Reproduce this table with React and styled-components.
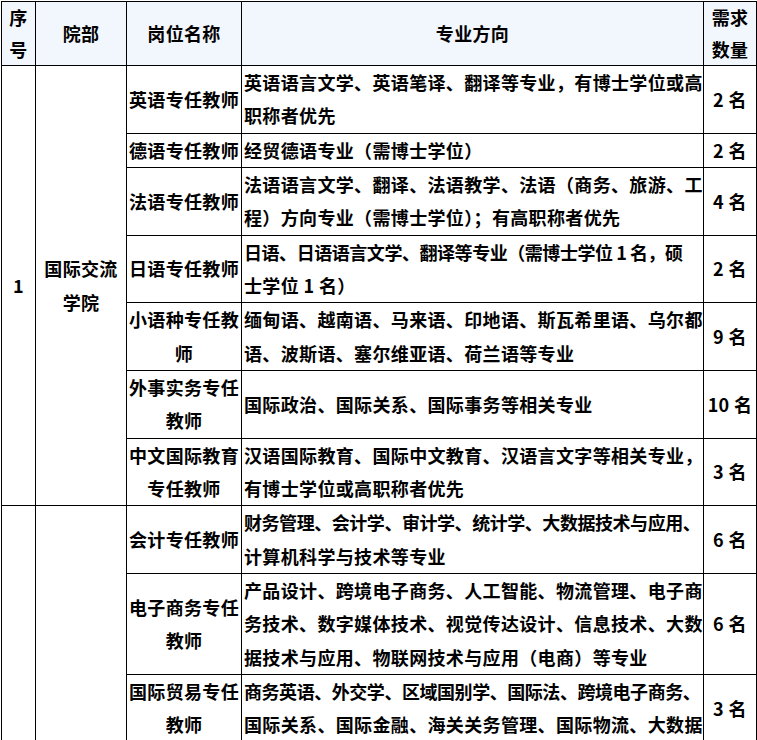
import React from "react";
import styled, { createGlobalStyle } from "styled-components";

const GlobalStyle = createGlobalStyle`
  html, body {
    margin: 0;
    padding: 0;
    background: #ffffff;
  }
  body {
    font-family: "Noto Sans CJK SC", "Noto Sans", sans-serif;
    color: #000;
  }
`;

const Page = styled.div`
  padding: 1px 0 0 1px;
`;

const Table = styled.table`
  border-collapse: collapse;
  table-layout: fixed;
  width: 755px;
  font-size: 18px;
  font-weight: 700;
  letter-spacing: 0.35px;
`;

const Th = styled.th`
  background: #f2f6fd;
  border: 1px solid #000;
  line-height: 31.5px;
  padding: 0 1px;
  text-align: center;
  vertical-align: middle;
  font-weight: 700;
`;

const Td = styled.td`
  border: 1px solid #000;
  line-height: 33.33px;
  padding: 0 ${(p) => (p.$left ? "2px" : "1px")};
  text-align: ${(p) => (p.$left ? "left" : "center")};
  vertical-align: middle;
  white-space: ${(p) => (p.$nowrap ? "nowrap" : "normal")};
`;

// long lines (26 chars) are squeezed a little, like Word's punctuation compression
const Line = styled.span`
  letter-spacing: ${(p) => (p.$tight ? "-0.45px" : "inherit")};
`;

const groups = [
  {
    no: "1",
    dept: "国际交流学院",
    rows: [
      { post: "英语专任教师", major: ["英语语言文学、英语笔译、翻译等专业，有博士学位或高", "职称者优先"], num: "2 名" },
      { post: "德语专任教师", major: ["经贸德语专业（需博士学位）"], num: "2 名" },
      { post: "法语专任教师", major: ["法语语言文学、翻译、法语教学、法语（商务、旅游、工", "程）方向专业（需博士学位）；有高职称者优先"], num: "4 名" },
      { post: "日语专任教师", major: ["日语、日语语言文学、翻译等专业（需博士学位 1 名，硕", "士学位 1 名）"], num: "2 名" },
      { post: "小语种专任教师", major: ["缅甸语、越南语、马来语、印地语、斯瓦希里语、乌尔都", "语、波斯语、塞尔维亚语、荷兰语等专业"], num: "9 名" },
      { post: "外事实务专任教师", major: ["国际政治、国际关系、国际事务等相关专业"], num: "10 名" },
      { post: "中文国际教育专任教师", major: ["汉语国际教育、国际中文教育、汉语言文字等相关专业，", "有博士学位或高职称者优先"], num: "3 名" },
    ],
  },
  {
    no: "",
    dept: "",
    rows: [
      { post: "会计专任教师", major: ["财务管理、会计学、审计学、统计学、大数据技术与应用、", "计算机科学与技术等专业"], num: "6 名" },
      { post: "电子商务专任教师", major: ["产品设计、跨境电子商务、人工智能、物流管理、电子商", "务技术、数字媒体技术、视觉传达设计、信息技术、大数", "据技术与应用、物联网技术与应用（电商）等专业"], num: "6 名" },
      { post: "国际贸易专任教师", major: ["商务英语、外交学、区域国别学、国际法、跨境电子商务、", "国际关系、国际金融、海关关务管理、国际物流、大数据"], num: "3 名" },
    ],
  },
];

const Major = ({ lines }) =>
  lines.map((l, i) => (
    <React.Fragment key={i}>
      {i > 0 && <br />}
      <Line $tight={l.length > 25}>{l}</Line>
    </React.Fragment>
  ));

export default function App() {
  return (
    <Page>
      <GlobalStyle />
      <Table>
        <colgroup>
          <col style={{ width: 34 }} />
          <col style={{ width: 91 }} />
          <col style={{ width: 115 }} />
          <col style={{ width: 462 }} />
          <col style={{ width: 53 }} />
        </colgroup>
        <thead>
          <tr>
            <Th>序号</Th>
            <Th>院部</Th>
            <Th>岗位名称</Th>
            <Th>专业方向</Th>
            <Th>需求数量</Th>
          </tr>
        </thead>
        <tbody>
          {groups.map((g, gi) =>
            g.rows.map((r, ri) => (
              <tr key={`${gi}-${ri}`}>
                {ri === 0 && <Td rowSpan={g.rows.length}>{g.no}</Td>}
                {ri === 0 && <Td rowSpan={g.rows.length}>{g.dept}</Td>}
                <Td>{r.post}</Td>
                <Td $left $nowrap>
                  <Major lines={r.major} />
                </Td>
                <Td $nowrap>{r.num}</Td>
              </tr>
            ))
          )}
        </tbody>
      </Table>
    </Page>
  );
}
